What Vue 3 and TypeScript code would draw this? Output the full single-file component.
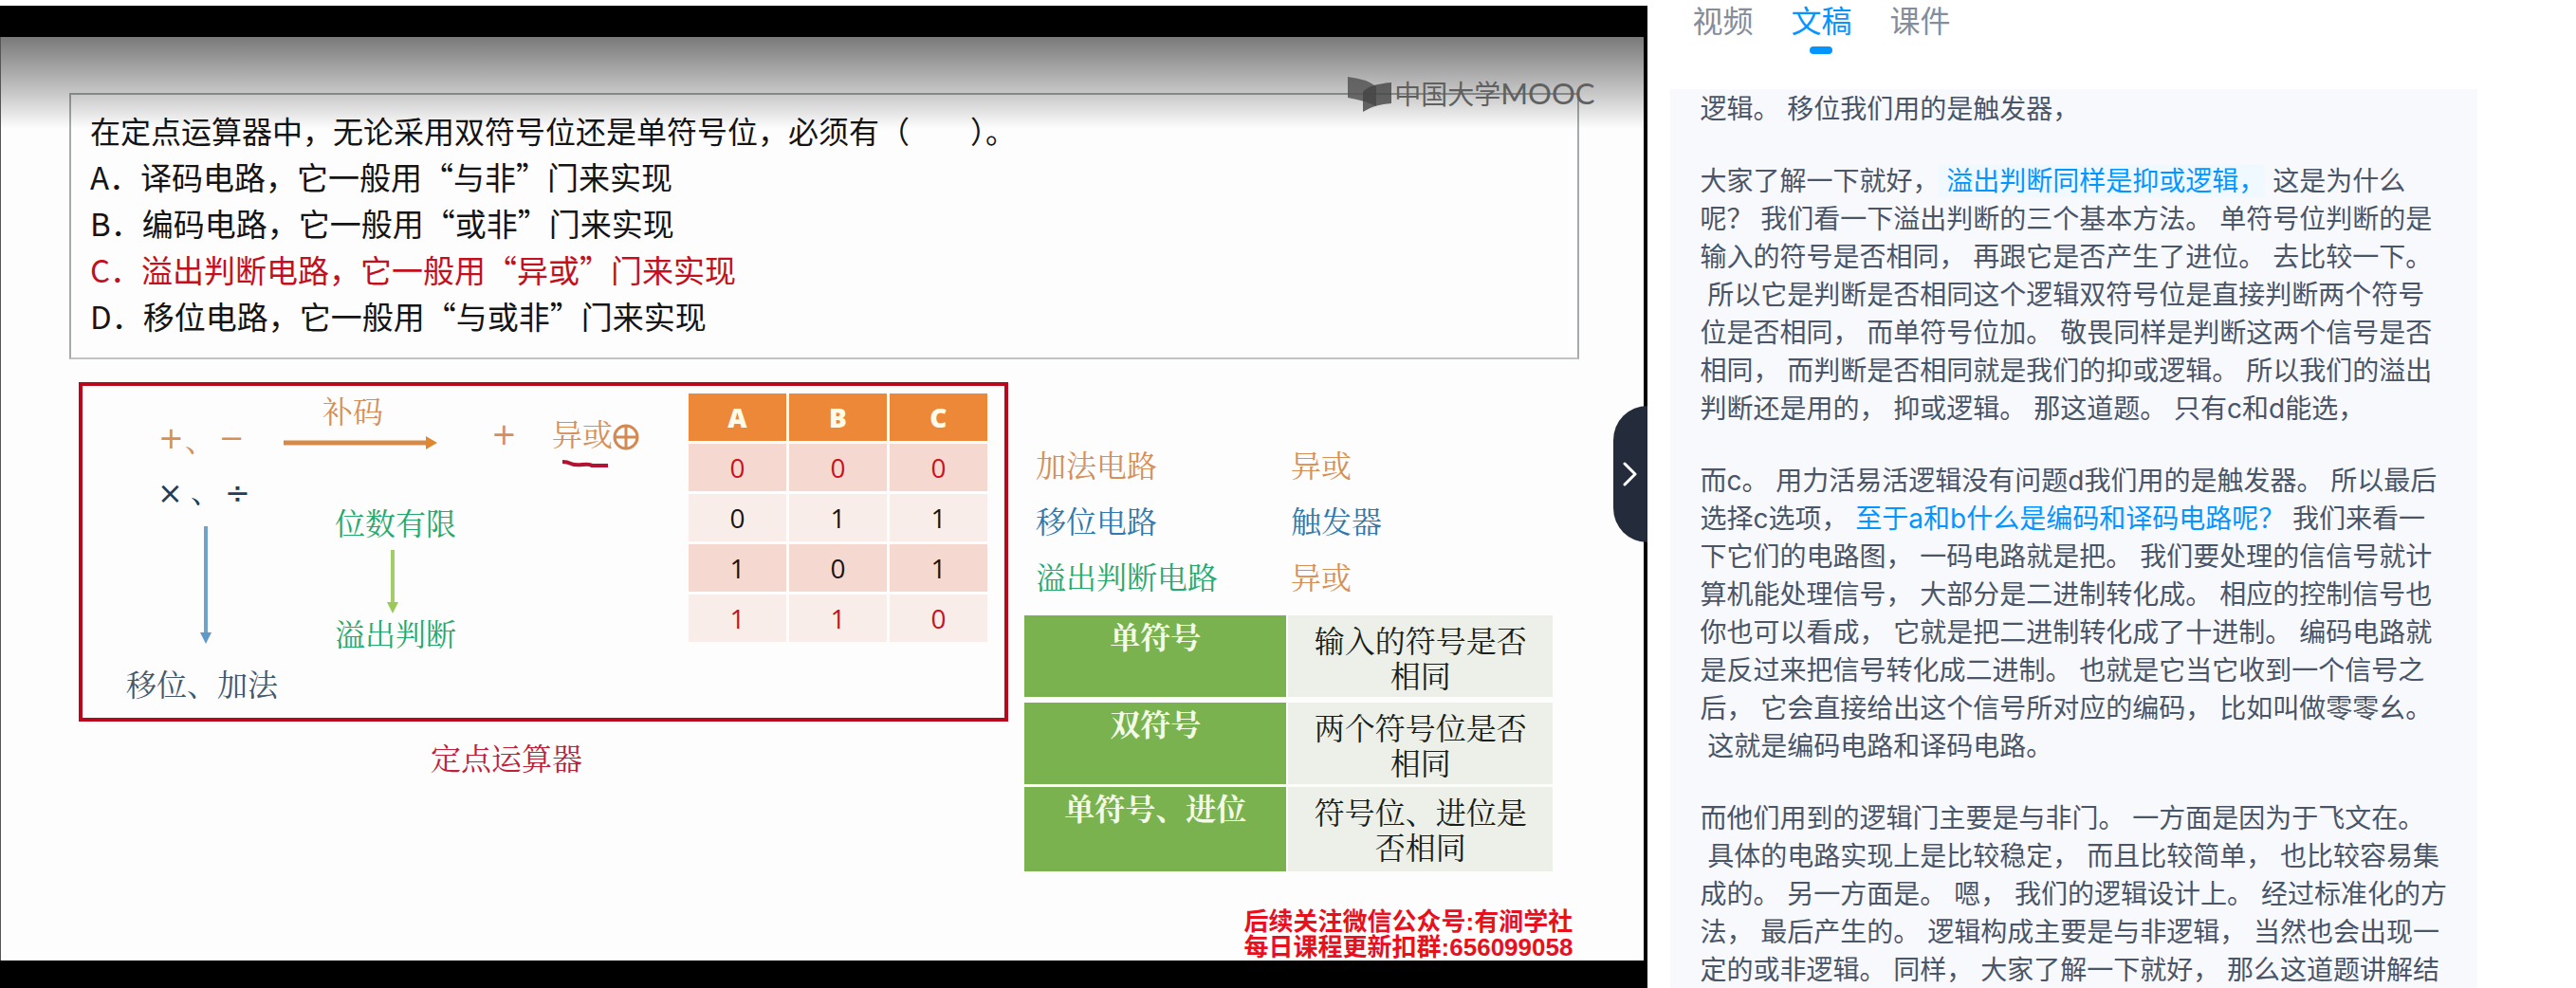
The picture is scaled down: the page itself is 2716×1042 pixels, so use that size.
<script setup lang="ts">
import { ref } from 'vue'

interface Option {
  text: string
  correct?: boolean
}
interface Node {
  text: string
  x: number
  y: number
  tone: string
}
interface Segment {
  text: string
  kind?: 'key' | 'current'
}

const tabs = ['视频', '文稿', '课件']
const active = ref('文稿')

const options: Option[] = [
  { text: 'A．译码电路，它一般用“与非”门来实现' },
  { text: 'B．编码电路，它一般用“或非”门来实现' },
  { text: 'C．溢出判断电路，它一般用“异或”门来实现', correct: true },
  { text: 'D．移位电路，它一般用“与或非”门来实现' },
]

const nodes: Node[] = [
  { text: '补码', x: 253, y: 9, tone: 'orange' },
  { text: '+', x: 80, y: 39, tone: 'orange symbol' },
  { text: '、', x: 108, y: 39, tone: 'orange' },
  { text: '−', x: 144, y: 39, tone: 'orange symbol' },
  { text: '+', x: 431, y: 35, tone: 'orange symbol' },
  { text: '异或', x: 495, y: 33, tone: 'orange' },
  { text: '×', x: 79, y: 97, tone: 'navy symbol' },
  { text: '、', x: 114, y: 93, tone: 'navy' },
  { text: '÷', x: 150, y: 97, tone: 'navy symbol' },
  { text: '位数有限', x: 266, y: 127, tone: 'green' },
  { text: '溢出判断', x: 266, y: 244, tone: 'green' },
  { text: '移位、加法', x: 46, y: 297, tone: 'slate' },
]

const truthRows = [
  { cells: [0, 0, 0], hot: true },
  { cells: [0, 1, 1], hot: false },
  { cells: [1, 0, 1], hot: false },
  { cells: [1, 1, 0], hot: true },
]

const circuits = [
  { name: '加法电路', gate: '异或', nameTone: 'orange', gateTone: 'orange' },
  { name: '移位电路', gate: '触发器', nameTone: 'blue', gateTone: 'blue' },
  { name: '溢出判断电路', gate: '异或', nameTone: 'green', gateTone: 'orange' },
]

const methods = [
  { name: '单符号', rule: '输入的符号是否相同' },
  { name: '双符号', rule: '两个符号位是否相同' },
  { name: '单符号、进位', rule: '符号位、进位是否相同' },
]

const transcript: Segment[][] = [
  [{ text: '逻辑。 移位我们用的是触发器，' }],
  [
    { text: '大家了解一下就好，' },
    { text: ' 溢出判断同样是抑或逻辑，', kind: 'current' },
    {
      text:
        ' 这是为什么\n呢？ 我们看一下溢出判断的三个基本方法。 单符号位判断的是\n' +
        '输入的符号是否相同， 再跟它是否产生了进位。 去比较一下。\n' +
        ' 所以它是判断是否相同这个逻辑双符号位是直接判断两个符号\n' +
        '位是否相同， 而单符号位加。 敬畏同样是判断这两个信号是否\n' +
        '相同， 而判断是否相同就是我们的抑或逻辑。 所以我们的溢出\n' +
        '判断还是用的， 抑或逻辑。 那这道题。 只有c和d能选，',
    },
  ],
  [
    { text: '而c。 用力活易活逻辑没有问题d我们用的是触发器。 所以最后\n选择c选项，' },
    { text: ' 至于a和b什么是编码和译码电路呢？', kind: 'key' },
    {
      text:
        ' 我们来看一\n下它们的电路图， 一码电路就是把。 我们要处理的信信号就计\n' +
        '算机能处理信号， 大部分是二进制转化成。 相应的控制信号也\n' +
        '你也可以看成， 它就是把二进制转化成了十进制。 编码电路就\n' +
        '是反过来把信号转化成二进制。 也就是它当它收到一个信号之\n' +
        '后， 它会直接给出这个信号所对应的编码， 比如叫做零零幺。\n' +
        ' 这就是编码电路和译码电路。',
    },
  ],
  [
    {
      text:
        '而他们用到的逻辑门主要是与非门。 一方面是因为于飞文在。\n' +
        ' 具体的电路实现上是比较稳定， 而且比较简单， 也比较容易集\n' +
        '成的。 另一方面是。 嗯， 我们的逻辑设计上。 经过标准化的方\n' +
        '法， 最后产生的。 逻辑构成主要是与非逻辑， 当然也会出现一\n' +
        '定的或非逻辑。 同样， 大家了解一下就好， 那么这道题讲解结',
    },
  ],
]

const paragraphs: Segment[][] = transcript.map((p) =>
  p.flatMap((s) => s.text.split(/(?<=\n)/).map((text) => ({ text, kind: s.kind }))),
)
</script>

<template>
  <main class="page">
    <section class="stage">
      <div class="slide">
        <div class="question">
          <p class="stem">在定点运算器中，无论采用双符号位还是单符号位，必须有（&emsp;&emsp;）。</p>
          <p v-for="o in options" :key="o.text" :class="{ correct: o.correct }">{{ o.text }}</p>
        </div>

        <div class="lower">
          <figure class="unit">
            <div class="diagram">
              <div class="canvas">
                <svg class="links" width="620" height="350" viewBox="0 0 620 350" aria-hidden="true">
                  <g fill="none" stroke-width="4">
                    <path d="M212 60H364" stroke="#d68a48" stroke-width="5" />
                    <path d="M130 148V262" stroke="#6fa3c8" />
                    <path d="M327 173V228" stroke="#a3cd68" />
                    <path d="M506 80q5 0 9 2t12 1t10 1h17" stroke="#b31232" />
                    <g stroke="#d28a52" stroke-width="3">
                      <circle cx="573" cy="54" r="12" />
                      <path d="M561 54h24M573 42v24" />
                    </g>
                  </g>
                  <path d="M362 53l12 7l-12 7z" fill="#df8830" />
                  <path d="M124 260h12l-6 12z" fill="#6098c8" />
                  <path d="M321 228h12l-6 12z" fill="#9ac95a" />
                </svg>
                <span
                  v-for="(n, i) in nodes"
                  :key="i"
                  class="node"
                  :class="n.tone"
                  :style="{ left: n.x + 'px', top: n.y + 'px' }"
                >{{ n.text }}</span>
              </div>
              <table class="truth">
                <thead>
                  <tr><th scope="col">A</th><th scope="col">B</th><th scope="col">C</th></tr>
                </thead>
                <tbody>
                  <tr v-for="(r, i) in truthRows" :key="i" :class="{ hot: r.hot }">
                    <td v-for="(c, j) in r.cells" :key="j">{{ c }}</td>
                  </tr>
                </tbody>
              </table>
            </div>
            <figcaption>定点运算器</figcaption>
          </figure>

          <div class="summary">
            <dl class="circuits">
              <div v-for="c in circuits" :key="c.name">
                <dt :class="c.nameTone">{{ c.name }}</dt>
                <dd :class="c.gateTone">{{ c.gate }}</dd>
              </div>
            </dl>
            <table class="methods">
              <tbody>
                <tr v-for="m in methods" :key="m.name">
                  <th scope="row">{{ m.name }}</th>
                  <td>{{ m.rule }}</td>
                </tr>
              </tbody>
            </table>
            <p class="notice">后续关注微信公众号:有涧学社<br />每日课程更新扣群:656099058</p>
          </div>
        </div>

        <div class="shade"></div>
        <div class="brand">
          <svg width="46" height="38" viewBox="0 0 46 38" aria-hidden="true">
            <path d="M0 0Q19 2 30 10V31Q18 25 0 22z" fill="#555" fill-opacity=".85" />
            <path d="M16 37V16Q22 8 46 6V28Q28 29 16 37z" fill="#444" fill-opacity=".8" />
          </svg>
          <span>中国大学<b>MOOC</b></span>
        </div>
      </div>
      <button class="fold" type="button" aria-label="收起">
        <svg width="16" height="28" viewBox="0 0 16 28" aria-hidden="true">
          <path d="M2 3L13 14L2 25" fill="none" stroke="#fff" stroke-width="3" stroke-linecap="round" stroke-linejoin="round" />
        </svg>
      </button>
    </section>

    <aside class="side">
      <nav class="tabs">
        <button
          v-for="t in tabs"
          :key="t"
          type="button"
          :class="{ on: t === active }"
          @click="active = t"
        >{{ t }}</button>
      </nav>
      <article class="script">
        <p v-for="(p, i) in paragraphs" :key="i"><span v-for="(s, j) in p" :key="j" :class="s.kind">{{ s.text }}</span></p>
      </article>
    </aside>
  </main>
</template>

<style>
body {
  margin: 0;
  background: #fff;
}
</style>

<style scoped>
.page {
  display: flex;
  height: 100vh;
  overflow: hidden;
  font-family: 'Inter', 'Noto Sans CJK SC', sans-serif;
}
p,
dl,
dd,
figure {
  margin: 0;
}
button {
  border: 0;
  padding: 0;
  font: inherit;
  background: none;
  cursor: pointer;
}

/* Video */
.stage {
  position: relative;
  flex: 1736;
  min-width: 0;
  display: flex;
  margin-top: 6px;
  padding: 33px 4px 29px 0;
  background: #000;
}
.slide {
  position: relative;
  flex: 1;
  overflow: hidden;
  box-sizing: border-box;
  border-left: 1px solid #555;
  padding: 59px 68px 0 72px;
  background: #fdfdfd;
  font-family: 'Noto Sans CJK SC', sans-serif;
  font-size: 32px;
}
.question {
  border: 2px solid #a5abab;
  border-bottom-color: #bfc3c3;
  padding: 13px 20px 19px;
  font-size: 33px;
  line-height: 49px;
  color: #141414;
}
.question .stem {
  font-size: 32px;
}
.question .correct {
  color: #c4101c;
}
.lower {
  display: grid;
  grid-template-columns: 979fr 585fr;
  column-gap: 17px;
  margin: 24px 0 0 10px;
  font-family: 'Noto Serif CJK SC', 'Noto Sans CJK SC', serif;
}
.diagram {
  display: flex;
  align-items: flex-start;
  box-sizing: border-box;
  height: 358px;
  border: 4px solid #b8081e;
}
.canvas {
  position: relative;
  flex: 1;
  align-self: stretch;
}
.links {
  position: absolute;
  left: 0;
  top: 0;
}
.node {
  position: absolute;
  line-height: 32px;
  white-space: nowrap;
}
.symbol {
  font-family: 'DejaVu Sans', sans-serif;
}
.orange { color: #d68f56; }
.green { color: #26a96c; }
.blue { color: #3079ae; }
.navy { color: #243f55; }
.slate { color: #44586c; }

.truth {
  width: 321px;
  margin: 5px 15px 0 0;
  border-collapse: separate;
  border-spacing: 3px;
  table-layout: fixed;
  font-family: 'Open Sans', sans-serif;
  font-size: 28px;
  font-weight: 500;
  line-height: 50px;
  text-align: center;
  color: #1c1414;
}
.truth th,
.truth td {
  padding: 0;
}
.truth th {
  font-weight: 800;
  color: #fffbe8;
  background: #ec8837;
}
.truth td {
  background: #f9edea;
}
.truth tbody tr:nth-child(odd) td {
  background: #f5d9d0;
}
.truth .hot {
  color: #cc1220;
}
figcaption {
  margin: 21px 0 0 371px;
  line-height: 32px;
  color: #bd2038;
}

.summary {
  display: flex;
  flex-direction: column;
}
.circuits {
  margin: 57px 0 0 12px;
  line-height: 59px;
}
.circuits div {
  display: grid;
  grid-template-columns: 269px 1fr;
}
.methods {
  width: 557px;
  margin-top: 12px;
  border-collapse: separate;
  border-spacing: 0;
  table-layout: fixed;
  line-height: 37px;
  text-align: center;
}
.methods th,
.methods td {
  box-sizing: border-box;
  height: 89px;
  vertical-align: top;
  border-bottom: 3px solid #fdfdfd;
}
.methods tr:first-child > * {
  height: 92px;
  border-bottom-width: 6px;
}
.methods tr:last-child > * {
  border-bottom: 0;
}
.methods th {
  padding: 3px 0 0;
  border-right: 2px solid #fdfdfd;
  font-weight: 700;
  color: #f4fbe6;
  background: #79b24f;
}
.methods td {
  padding: 7px 14px 0;
  color: #1a1e1a;
  background: #ecf0e8;
}
.notice {
  align-self: flex-end;
  margin: 40px 7px 0 0;
  font-family: 'Liberation Sans', 'Noto Sans CJK SC', sans-serif;
  font-size: 26px;
  font-weight: 700;
  line-height: 27px;
  color: #e8101c;
}

.shade {
  position: absolute;
  inset: 0 0 auto;
  height: 97px;
  background: linear-gradient(rgba(0, 0, 0, 0.52), rgba(0, 0, 0, 0.22) 60%, rgba(0, 0, 0, 0));
}
.brand {
  position: absolute;
  right: 52px;
  top: 42px;
  display: flex;
  gap: 3px;
  font-size: 28px;
  line-height: 34px;
  color: #606060;
}
.brand span {
  display: flex;
}
.brand b {
  font-family: 'Lato', sans-serif;
  font-size: 31px;
  font-weight: 400;
}
.fold {
  position: absolute;
  right: 0;
  top: 422px;
  display: flex;
  align-items: center;
  justify-content: center;
  width: 36px;
  height: 144px;
  border-radius: 36px 0 0 36px;
  background: #242b3a;
}

/* Transcript */
.side {
  flex: 980;
  min-width: 0;
  display: flex;
  flex-direction: column;
}
.tabs {
  display: flex;
  gap: 40px;
  height: 94px;
  padding-left: 47px;
  font-size: 32px;
  line-height: 46px;
}
.tabs button {
  position: relative;
  align-self: flex-start;
  color: #858d9b;
}
.tabs .on {
  color: #0595ff;
}
.tabs .on::after {
  content: '';
  position: absolute;
  left: calc(50% - 12px);
  top: 49px;
  width: 24px;
  height: 8px;
  border-radius: 4px;
  background: #0595ff;
}
.script {
  flex: 1;
  overflow: hidden;
  margin: 0 104px 0 24px;
  padding: 1px 24px 0 31px;
  font-size: 28px;
  line-height: 40px;
  color: #4a5567;
  background: #f8f9fd;
}
.script p {
  margin-bottom: 36px;
  white-space: pre-wrap;
}
.key,
.current {
  color: #0595ff;
}
.current {
  background: #f0f9ff;
}
</style>
